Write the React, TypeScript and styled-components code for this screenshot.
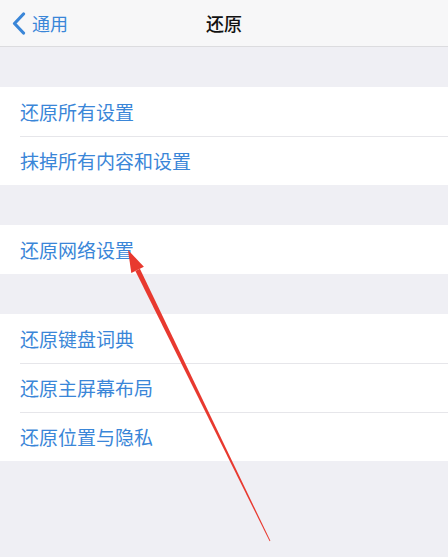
import React from "react";
import styled, { createGlobalStyle } from "styled-components";

const GlobalStyle = createGlobalStyle`
  html, body {
    margin: 0;
    padding: 0;
    background: #efeff4;
  }
  body {
    font-family: "Noto Sans CJK SC", "Noto Sans", sans-serif;
  }
`;

const Page = styled.div`
  position: relative;
  width: 448px;
  height: 557px;
  background: #efeff4;
  overflow: hidden;
  display: flex;
  flex-direction: column;
`;

const NavBar = styled.div`
  height: 47px;
  flex-shrink: 0;
  background: #f7f7f8;
  border-bottom: 1px solid #dcdcdf;
  box-sizing: border-box;
  display: grid;
  grid-template-columns: 1fr auto 1fr;
  align-items: center;
  padding: 0 12px;
`;

const BackButton = styled.div`
  display: flex;
  align-items: center;
  gap: 6px;
  color: #3a86d8;
  font-size: 18px;
`;

const Title = styled.div`
  font-size: 18px;
  font-weight: 500;
  color: #111;
`;

const Content = styled.div`
  display: flex;
  flex-direction: column;
  gap: 40px;
  padding-top: 40px;
`;

const Group = styled.div`
  background: #fff;
  display: flex;
  flex-direction: column;
`;

const Row = styled.div`
  height: 49px;
  display: flex;
  align-items: center;
  padding-left: 20px;
  color: #3a86d8;
  font-size: 19px;
  position: relative;
  & + &::before {
    content: "";
    position: absolute;
    left: 20px;
    right: 0;
    top: 0;
    height: 1px;
    background: #e6e6ea;
  }
`;

const Overlay = styled.svg`
  position: absolute;
  left: 0;
  top: 0;
  pointer-events: none;
`;

const groups = [
  ["还原所有设置", "抹掉所有内容和设置"],
  ["还原网络设置"],
  ["还原键盘词典", "还原主屏幕布局", "还原位置与隐私"],
];

export default function App() {
  return (
    <>
      <GlobalStyle />
      <Page>
        <NavBar>
          <BackButton>
            <svg width="14" height="23" viewBox="0 0 14 23">
              <path d="M11.5 2 L2.5 11.5 L11.5 21" fill="none" stroke="#3a86d8" strokeWidth="3.2" strokeLinecap="round" strokeLinejoin="round" />
            </svg>
            通用
          </BackButton>
          <Title>还原</Title>
          <div />
        </NavBar>
        <Content>
          {groups.map((g, i) => (
            <Group key={i}>
              {g.map((t) => (
                <Row key={t}>{t}</Row>
              ))}
            </Group>
          ))}
        </Content>
        <Overlay width="448" height="557" viewBox="0 0 448 557">
          <polygon points="270.4,540.8 139.9,268.7 135.4,270.9 269.6,541.2" fill="#e8392f" />
          <polygon points="128,250 143.9,266.7 131.3,272.9" fill="#e8392f" />
        </Overlay>
      </Page>
    </>
  );
}
